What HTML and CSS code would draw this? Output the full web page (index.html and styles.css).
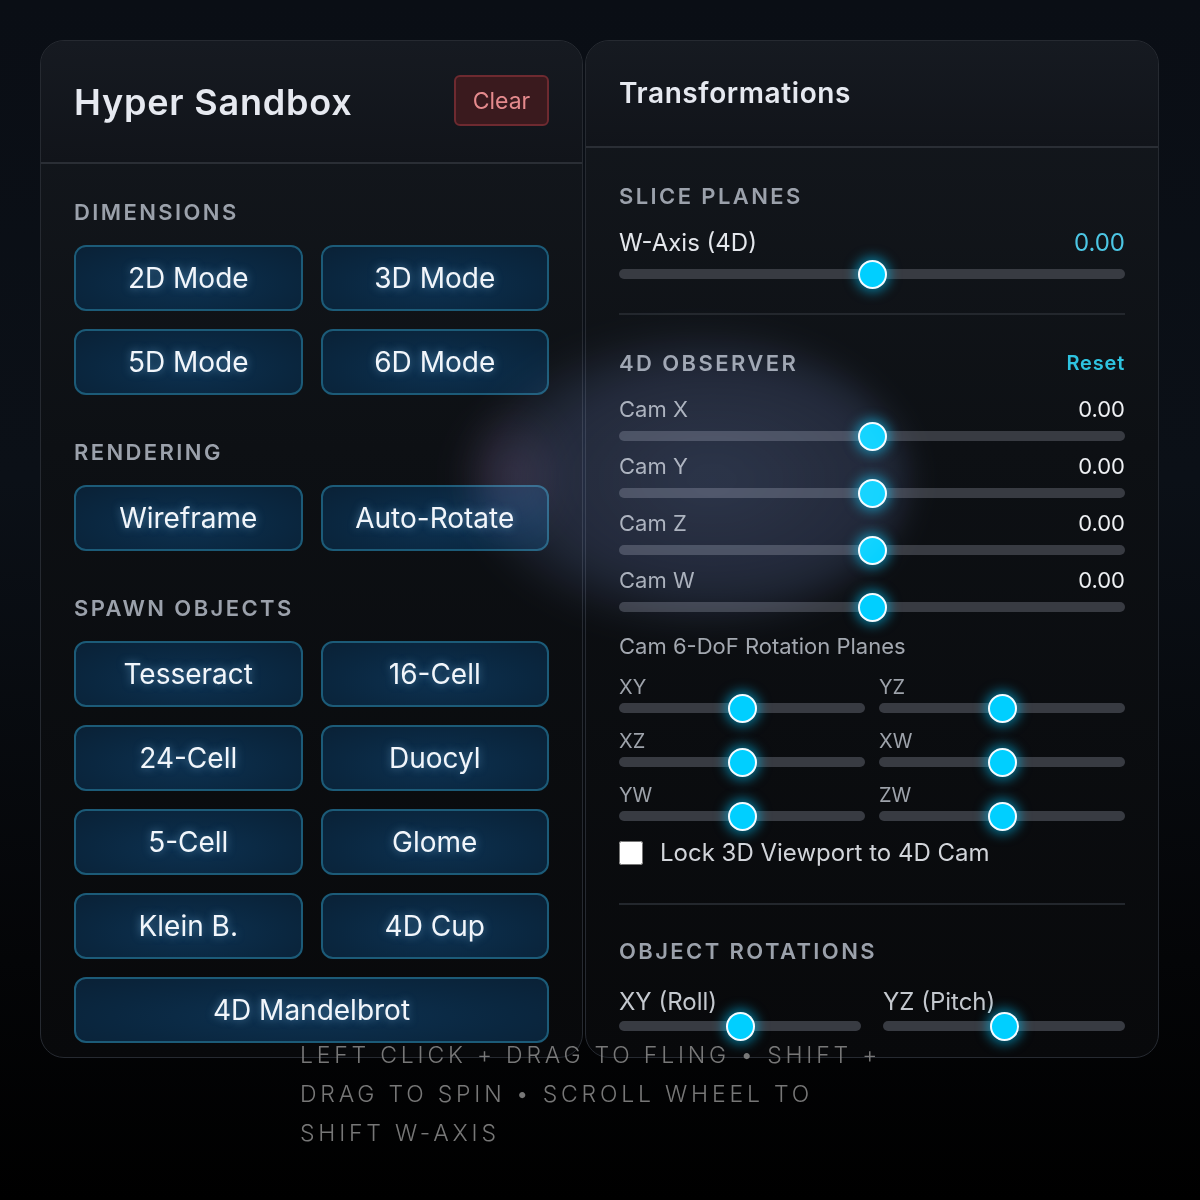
FILE: index.html
```html
<!DOCTYPE html>
<html lang="en">
<head>
  <meta charset="UTF-8">
  <title>Hyper Sandbox</title>
  <link rel="stylesheet" href="styles.css">
</head>
<body>
  <div class="stage">
    <div class="panel sandbox">
      <div class="panel-head">
        <h1>Hyper Sandbox</h1>
        <button class="clear-btn">Clear</button>
      </div>
      <div class="panel-body">
        <h3 class="section-title">Dimensions</h3>
        <div class="btn-grid">
          <button class="mode-btn">2D Mode</button>
          <button class="mode-btn">3D Mode</button>
          <button class="mode-btn">5D Mode</button>
          <button class="mode-btn">6D Mode</button>
        </div>

        <h3 class="section-title">Rendering</h3>
        <div class="btn-grid">
          <button class="mode-btn">Wireframe</button>
          <button class="mode-btn">Auto-Rotate</button>
        </div>

        <h3 class="section-title">Spawn Objects</h3>
        <div class="btn-grid">
          <button class="mode-btn">Tesseract</button>
          <button class="mode-btn">16-Cell</button>
          <button class="mode-btn">24-Cell</button>
          <button class="mode-btn">Duocyl</button>
          <button class="mode-btn">5-Cell</button>
          <button class="mode-btn">Glome</button>
          <button class="mode-btn">Klein B.</button>
          <button class="mode-btn">4D Cup</button>
          <button class="mode-btn wide">4D Mandelbrot</button>
        </div>
      </div>
    </div>

    <div class="panel transforms">
      <div class="panel-head">
        <h2>Transformations</h2>
      </div>
      <div class="panel-body">
        <h3 class="section-title">Slice Planes</h3>
        <div class="row main-row">
          <span>W-Axis (4D)</span>
          <span class="accent">0.00</span>
        </div>
        <input type="range" class="slider" min="-1" max="1" step="0.01" value="0">

        <hr class="divider">

        <div class="row section-row">
          <h3 class="section-title">4D Observer</h3>
          <button class="link-btn">Reset</button>
        </div>
        <div class="cam">
          <div class="row cam-row"><span>Cam X</span><span class="val">0.00</span></div>
          <input type="range" class="slider" min="-1" max="1" step="0.01" value="0">
          <div class="row cam-row"><span>Cam Y</span><span class="val">0.00</span></div>
          <input type="range" class="slider" min="-1" max="1" step="0.01" value="0">
          <div class="row cam-row"><span>Cam Z</span><span class="val">0.00</span></div>
          <input type="range" class="slider" min="-1" max="1" step="0.01" value="0">
          <div class="row cam-row"><span>Cam W</span><span class="val">0.00</span></div>
          <input type="range" class="slider" min="-1" max="1" step="0.01" value="0">
        </div>

        <div class="sub-title">Cam 6-DoF Rotation Planes</div>
        <div class="plane-grid">
          <label class="plane"><span>XY</span><input type="range" class="slider" min="-1" max="1" step="0.01" value="0"></label>
          <label class="plane"><span>YZ</span><input type="range" class="slider" min="-1" max="1" step="0.01" value="0"></label>
          <label class="plane"><span>XZ</span><input type="range" class="slider" min="-1" max="1" step="0.01" value="0"></label>
          <label class="plane"><span>XW</span><input type="range" class="slider" min="-1" max="1" step="0.01" value="0"></label>
          <label class="plane"><span>YW</span><input type="range" class="slider" min="-1" max="1" step="0.01" value="0"></label>
          <label class="plane"><span>ZW</span><input type="range" class="slider" min="-1" max="1" step="0.01" value="0"></label>
        </div>

        <label class="lock">
          <input type="checkbox">
          <span>Lock 3D Viewport to 4D Cam</span>
        </label>

        <hr class="divider">

        <h3 class="section-title">Object Rotations</h3>
        <div class="rot-grid">
          <label class="rot"><span>XY (Roll)</span><input type="range" class="slider" min="-1" max="1" step="0.01" value="0"></label>
          <label class="rot"><span>YZ (Pitch)</span><input type="range" class="slider" min="-1" max="1" step="0.01" value="0"></label>
        </div>
      </div>
    </div>

    <div class="haze"></div>
    <div class="haze tint"></div>

    <p class="hint">Left click + drag to fling • Shift + drag to spin • Scroll wheel to shift W-axis</p>
  </div>
</body>
</html>
```

FILE: styles.css
```css
* {
  box-sizing: border-box;
}

body {
  margin: 0;
  min-height: 1200px;
  font-family: Inter, "Noto Sans", sans-serif;
  color: #e8ebf0;
  background: linear-gradient(180deg, #0a0e15 0%, #0b1017 40%, #040507 80%, #000 100%);
}

.stage {
  position: relative;
  padding: 40px;
  display: grid;
  grid-template-columns: 543px 574px;
  gap: 2px;
}

.panel {
  height: 1018px;
  border: 1px solid #262a31;
  border-radius: 24px;
  background: linear-gradient(180deg, #14181e 0%, #0d1014 40%, #08090b 100%);
  overflow: hidden;
}

.panel-head {
  display: flex;
  align-items: center;
  justify-content: space-between;
  padding: 0 33px 0 33px;
  border-bottom: 2px solid #2a2e35;
  background: linear-gradient(180deg, #161a21, #11141a);
}

.sandbox .panel-head {
  height: 123px;
}

.transforms .panel-head {
  height: 107px;
  align-items: flex-start;
  padding-top: 35px;
}

h1 {
  margin: 0;
  font-size: 36px;
  font-weight: 600;
  letter-spacing: 0.8px;
  color: #e6e9f0;
}

h2 {
  margin: 0;
  font-size: 28px;
  font-weight: 600;
  letter-spacing: 0.6px;
  color: #e6e9f0;
}

.clear-btn {
  width: 95px;
  height: 51px;
  margin-top: -2px;
  font-family: inherit;
  font-size: 23px;
  color: #e58a8d;
  background: #3a1a1e;
  border: 2px solid #6e2a30;
  border-radius: 6px;
}

.panel-body {
  padding: 35px 33px 0;
}

.section-title {
  margin: 0;
  font-size: 22px;
  line-height: 26px;
  font-weight: 600;
  letter-spacing: 2.4px;
  text-transform: uppercase;
  color: #9ba1ab;
}

/* ---- left panel buttons ---- */

.btn-grid {
  display: grid;
  grid-template-columns: 1fr 1fr;
  gap: 18px;
  margin: 20px 0 44px;
}

.mode-btn {
  height: 66px;
  font-family: inherit;
  font-size: 28px;
  color: #f2f6fb;
  text-shadow: 0 0 8px rgba(140, 210, 255, 0.5);
  background: radial-gradient(ellipse at 50% 60%, #0d3150 0%, #0a2740 60%, #0a2136 100%);
  border: 2px solid #1c5b78;
  border-radius: 12px;
}

.mode-btn.wide {
  grid-column: span 2;
}

/* ---- right panel ---- */

.row {
  display: flex;
  justify-content: space-between;
  align-items: center;
}

.main-row {
  margin-top: 21px;
  font-size: 24px;
  line-height: 26px;
  color: #e4e7ec;
}

.accent {
  color: #4cc6e4;
}

.slider {
  -webkit-appearance: none;
  appearance: none;
  display: block;
  width: 100%;
  height: 28px;
  margin: 0;
  background: transparent;
}

.slider::-webkit-slider-runnable-track {
  height: 10px;
  border-radius: 5px;
  background: #383b42;
}

.slider::-webkit-slider-thumb {
  -webkit-appearance: none;
  width: 29px;
  height: 29px;
  margin-top: -9.5px;
  border-radius: 50%;
  background: #00cfff;
  border: 2px solid #f4fbff;
  box-shadow: 0 0 12px 3px rgba(0, 200, 255, 0.55);
}

.main-row + .slider {
  margin-top: 4px;
}

.divider {
  margin: 25px 0 0;
  border: none;
  border-top: 2px solid #23272d;
}

.section-row {
  margin-top: 35px;
}

.link-btn {
  padding: 0;
  font-family: inherit;
  font-size: 20px;
  font-weight: 600;
  letter-spacing: 0.8px;
  color: #2ec3e0;
  background: none;
  border: none;
}

.cam {
  margin-top: 20px;
}

.cam-row {
  font-size: 22px;
  line-height: 26px;
  color: #a3a8b0;
}

.cam-row .val {
  font-size: 22px;
  color: #eef0f3;
}

.cam .slider {
  margin-bottom: 3px;
}

.sub-title {
  margin-top: 12px;
  font-size: 22px;
  line-height: 26px;
  color: #a3a8b0;
}

.plane-grid {
  display: grid;
  grid-template-columns: 1fr 1fr;
  column-gap: 14px;
  margin-top: 21px;
}

.plane {
  display: block;
  font-size: 20px;
  line-height: 14px;
  color: #9ea3ab;
}

.plane .slider {
  margin-top: 0;
  margin-bottom: 12px;
}

.lock {
  display: flex;
  align-items: center;
  gap: 17px;
  margin-top: -4px;
  font-size: 24px;
  color: #d2d5da;
}

.lock input {
  width: 24px;
  height: 24px;
  margin: 0;
  accent-color: #fff;
}

.transforms .lock + .divider {
  margin-top: 36px;
}

.transforms .divider + .section-title {
  margin-top: 33px;
}

.rot-grid {
  display: grid;
  grid-template-columns: 1fr 1fr;
  column-gap: 22px;
  margin-top: 28px;
}

.rot {
  display: block;
  font-size: 24px;
  line-height: 20px;
  color: #c4c8ce;
}

/* soft light leaking from the viewport behind the panels */
.haze {
  position: absolute;
  left: 470px;
  top: 330px;
  width: 440px;
  height: 300px;
  border-radius: 50%;
  background: radial-gradient(ellipse at 55% 50%, rgba(80, 95, 140, 0.42) 0%, rgba(70, 85, 130, 0.32) 50%, rgba(60, 70, 120, 0) 75%);
  filter: blur(14px);
  mix-blend-mode: screen;
  pointer-events: none;
}

.haze.tint {
  left: 450px;
  top: 400px;
  width: 120px;
  height: 150px;
  background: radial-gradient(ellipse at 50% 50%, rgba(120, 80, 130, 0.25) 0%, rgba(120, 80, 130, 0) 70%);
}

.hint {
  position: absolute;
  left: 300px;
  top: 1036px;
  width: 600px;
  margin: 0;
  font-size: 23px;
  line-height: 39px;
  font-weight: 300;
  letter-spacing: 3.8px;
  text-transform: uppercase;
  color: rgba(140, 140, 140, 0.85);
}
```
